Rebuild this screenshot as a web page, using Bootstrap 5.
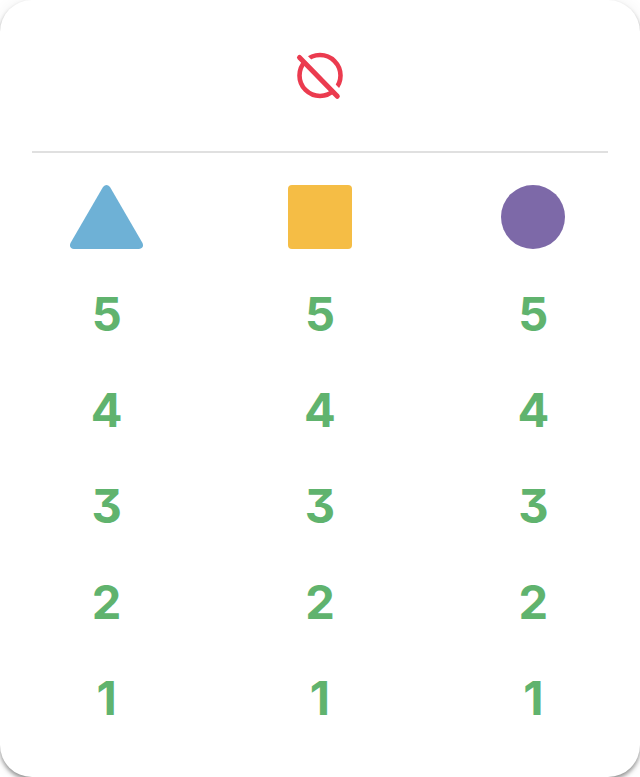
<!DOCTYPE html>
<html lang="en">
<head>
<meta charset="utf-8">
<meta name="viewport" content="width=device-width, initial-scale=1">
<title>Shape numbers</title>
<link href="https://cdn.jsdelivr.net/npm/bootstrap@5.3.0/dist/css/bootstrap.min.css" rel="stylesheet">
<style>
  .score-panel {
    min-height: 100vh;
    border-radius: 32px;
    box-shadow: 0 0 16px rgba(0, 0, 0, .06), 0 3px 4px rgba(0, 0, 0, .4);
  }
  .panel-head { padding: 51px 0 50px; margin: 0 32px; border-bottom: 2px solid #e0e0e0; }
  .score-table { table-layout: fixed; font-family: Inter, "Liberation Sans", sans-serif; }
  .score-table th { padding: 32px 0 17px; }
  .score-table td {
    height: 96px;
    padding: 0;
    color: #60b36e;
    font-size: 47px;
    line-height: 48px;
    font-weight: 700;
    font-feature-settings: "cv09";
  }
</style>
</head>
<body class="bg-white">
<main class="score-panel bg-white overflow-hidden">
  <header class="panel-head d-flex justify-content-center">
    <svg width="50" height="50" viewBox="0 0 50 50" fill="none" role="img" aria-label="None">
      <circle cx="25" cy="24.5" r="20.5" stroke="#eb3b4f" stroke-width="4.6"/>
      <path d="M6.500 2.500 46.500 43.500" stroke="#fff" stroke-width="5.400"/>
      <path d="M4.500 6.500 42.300 45.300" stroke="#eb3b4f" stroke-width="5" stroke-linecap="round"/>
    </svg>
  </header>
  <table class="score-table w-100 text-center align-middle">
    <thead>
      <tr>
        <th scope="col"><svg class="d-block mx-auto" width="74" height="64" viewBox="0 0 74 64" role="img" aria-label="Triangle"><path d="M33 2Q36.500 -2 40 2L72.500 58Q74.500 63 69 64H4Q-1.500 63 .5 58Z" fill="#6eb1d6"/></svg></th>
        <th scope="col"><svg class="d-block mx-auto" width="64" height="64" role="img" aria-label="Square"><rect width="64" height="64" rx="4" fill="#f5bd45"/></svg></th>
        <th scope="col"><svg class="d-block mx-auto" width="64" height="64" role="img" aria-label="Circle"><circle cx="32" cy="32" r="32" fill="#7d69a8"/></svg></th>
      </tr>
    </thead>
    <tbody>
      <tr><td>5</td><td>5</td><td>5</td></tr>
      <tr><td>4</td><td>4</td><td>4</td></tr>
      <tr><td>3</td><td>3</td><td>3</td></tr>
      <tr><td>2</td><td>2</td><td>2</td></tr>
      <tr><td>1</td><td>1</td><td>1</td></tr>
    </tbody>
  </table>
</main>
<script src="https://cdn.jsdelivr.net/npm/bootstrap@5.3.0/dist/js/bootstrap.bundle.min.js"></script>
</body>
</html>
